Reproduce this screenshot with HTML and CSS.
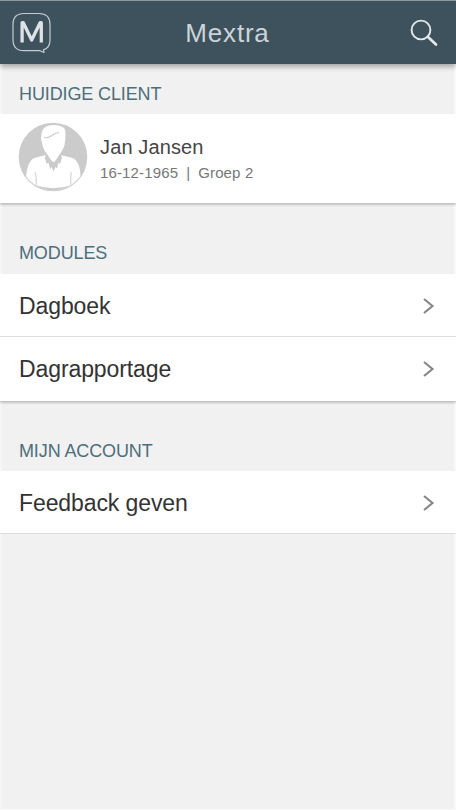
FILE: index.html
```html
<!DOCTYPE html>
<html lang="nl">
<head>
<meta charset="utf-8">
<title>Mextra</title>
<link rel="stylesheet" href="styles.css">
</head>
<body>
<div class="app">
  <header class="header">
    <svg class="logo" width="40" height="42" viewBox="0 0 40 42" fill="none">
      <path d="M12 1.500H27Q38 1.500 38 12.500V28Q38 36 31.500 37.800L32 40.500L28 38.700H12Q1 38.700 1 27.500V12.500Q1 1.500 12 1.500Z" stroke="#c3cdd3" stroke-width="1.200" stroke-linejoin="round"/>
      <path d="M10.100 30.500V10.700H11.300L19.700 28L28.100 10.700H29.300V30.500" stroke="#dce2e6" stroke-width="3.300" stroke-linejoin="round"/>
    </svg>
    <h1 class="title">Mextra</h1>
    <svg class="search" width="28" height="28" viewBox="0 0 28 28" fill="none" stroke="#e3e8ea">
      <circle cx="11" cy="11" r="9.400" stroke-width="1.900"/>
      <path d="M17.700 17.700L26 25.600" stroke-width="2.700" stroke-linecap="round"/>
    </svg>
  </header>
  <main class="content">
    <section class="section client">
      <h2 class="heading">HUIDIGE CLIENT</h2>
      <div class="card">
        <svg class="avatar" width="70" height="70" viewBox="0 0 70 70">
          <defs><clipPath id="round"><circle cx="35" cy="35" r="33.300"/></clipPath></defs>
          <circle cx="35" cy="35" r="34.300" fill="#cbcbcb"/>
          <g clip-path="url(#round)">
            <path d="M6 70L9 48Q11 37 18 35.500L28 33L42 33L53 35.500Q60 37 62 48L64 70Z" fill="#fff"/>
            <path d="M28 32L26.800 36L28.800 42L30.500 40.500L32 47L33.500 45L35.500 49.500L37.500 45L39 46.500L40.500 40.500L42 42L44 36L42.500 32Z" fill="#cbcbcb"/>
            <path d="M23.700 10Q26 3 35.500 3Q47 3.500 47.300 9L47.500 16L46.500 23Q45.500 27 41.500 32.500L37.500 38.500Q35.500 41.500 33.500 38.500L29 32Q25 27 24.500 23L23 17Z" fill="#fff"/>
            <path d="M26 15.500Q30 16.500 34 13.500Q37 11 41 10.500" fill="none" stroke="#cbcbcb" stroke-width="1.200"/>
            <path d="M17 50Q19 56 18 65M53.500 50Q52 56 53 65" fill="none" stroke="#dcdcdc" stroke-width="1.400"/>
            <path d="M17 63Q35 69.500 54 63L50 67L35 70L20 67Z" fill="#cbcbcb"/>
          </g>
        </svg>
        <div class="person">
          <div class="name">Jan Jansen</div>
          <div class="details"><span>16-12-1965</span><span>|</span><span>Groep 2</span></div>
        </div>
      </div>
    </section>
    <section class="section modules">
      <h2 class="heading">MODULES</h2>
      <div class="list">
        <div class="row"><span>Dagboek</span><svg class="chevron" width="12" height="18" viewBox="0 0 12 18"><path d="M1 2L9.500 9L1 16" fill="none" stroke="#858585" stroke-width="2.100"/></svg></div>
        <div class="row"><span>Dagrapportage</span><svg class="chevron" width="12" height="18" viewBox="0 0 12 18"><path d="M1 2L9.500 9L1 16" fill="none" stroke="#858585" stroke-width="2.100"/></svg></div>
      </div>
    </section>
    <section class="section account">
      <h2 class="heading">MIJN ACCOUNT</h2>
      <div class="list last">
        <div class="row"><span>Feedback geven</span><svg class="chevron" width="12" height="18" viewBox="0 0 12 18"><path d="M1 2L9.500 9L1 16" fill="none" stroke="#858585" stroke-width="2.100"/></svg></div>
      </div>
    </section>
  </main>
</div>
</body>
</html>
```
FILE: styles.css
```css
* { box-sizing: border-box; }
body { margin: 0; background: #f9f9f9; font-family: "Liberation Sans", Arial, sans-serif; }
h1, h2 { margin: 0; font-weight: normal; }
svg { display: block; }
.app {
  width: 456px;
  height: 809px;
  display: flex;
  flex-direction: column;
  background: linear-gradient(to right, #f6f6f6 2px, #f1f1f1 2px, #f1f1f1 454px, #f9f9f9 454px);
  overflow: hidden;
}
.header {
  flex: none;
  height: 64px;
  padding: 0 18px 0 12px;
  display: grid;
  grid-template-columns: 40px 1fr 40px;
  align-items: center;
  background: #3d525d;
  border-top: 1px solid #8d999f;
  box-shadow: 0 3px 5px rgba(0, 0, 0, .3);
  z-index: 1;
}
.logo { margin-top: 1px; }
.title { color: #cdd4d9; font-size: 26px; line-height: 30px; letter-spacing: .8px; text-align: center; padding-left: 5px; }
.search { justify-self: end; }
.section { display: flex; flex-direction: column; }
.heading { padding-left: 19px; height: 42px; line-height: 22px; font-size: 18px; letter-spacing: -.12px; color: #4c6f7c; padding-top: 10px; }
.client .heading { height: 50px; padding-top: 19px; }
.card { height: 89px; background: #fff; box-shadow: 0 2px 2px rgba(0, 0, 0, .2); display: flex; align-items: flex-start; padding: 8px 18px; }
.person { margin-left: 12px; padding-top: 13px; }
.name { font-size: 20px; line-height: 24px; letter-spacing: .13px; color: #454545; }
.details { display: flex; gap: 8px; font-size: 15px; line-height: 20px; margin-top: 4px; letter-spacing: .14px; color: #777; }
.modules { padding-top: 29px; }
.account { padding-top: 28px; }
.account .heading { padding-top: 11px; }
.list { background: #fff; box-shadow: 0 2px 2px rgba(0, 0, 0, .2); }
.list.last { box-shadow: 0 1px 0 #dedede; }
.row { height: 62px; padding: 1px 21px 0 19px; display: flex; align-items: center; justify-content: space-between; font-size: 23px; line-height: 30px; letter-spacing: -.1px; color: #333; }
.row + .row { height: 65px; border-top: 1px solid #dedede; padding-top: 0; }
```
